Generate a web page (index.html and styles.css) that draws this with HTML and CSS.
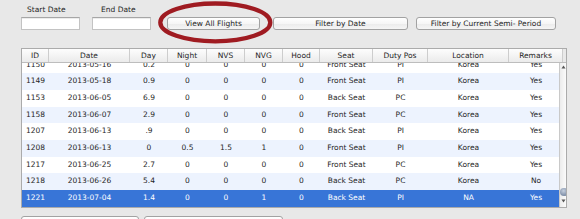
FILE: index.html
```html
<!DOCTYPE html>
<html>
<head>
<meta charset="utf-8">
<link rel="stylesheet" href="styles.css">
</head>
<body>
<div class="window">
  <div class="toolbar">
    <label class="field">
      <span class="field-label">Start Date</span>
      <input class="text-input" type="text">
    </label>
    <label class="field">
      <span class="field-label field-label--end">End Date</span>
      <input class="text-input" type="text">
    </label>
    <div class="actions">
      <button class="btn btn-all">View All Flights</button>
      <button class="btn btn-date">Filter by Date</button>
      <button class="btn btn-semi">Filter by Current Semi- Period</button>
    </div>
  </div>

  <div class="grid">
    <div class="thead">
      <div class="th">ID</div>
      <div class="th">Date</div>
      <div class="th">Day</div>
      <div class="th">Night</div>
      <div class="th">NVS</div>
      <div class="th">NVG</div>
      <div class="th">Hood</div>
      <div class="th">Seat</div>
      <div class="th">Duty Pos</div>
      <div class="th">Location</div>
      <div class="th">Remarks</div>
      <div class="th th-corner"></div>
    </div>
    <div class="tbody">
      <div class="rows">
        <div class="row"><span>1150</span><span>2013-05-16</span><span>0.2</span><span>0</span><span>0</span><span>0</span><span>0</span><span>Front Seat</span><span>PI</span><span>Korea</span><span>Yes</span></div>
        <div class="row"><span>1149</span><span>2013-05-18</span><span>0.9</span><span>0</span><span>0</span><span>0</span><span>0</span><span>Front Seat</span><span>PI</span><span>Korea</span><span>Yes</span></div>
        <div class="row"><span>1153</span><span>2013-06-05</span><span>6.9</span><span>0</span><span>0</span><span>0</span><span>0</span><span>Back Seat</span><span>PC</span><span>Korea</span><span>Yes</span></div>
        <div class="row"><span>1158</span><span>2013-06-07</span><span>2.9</span><span>0</span><span>0</span><span>0</span><span>0</span><span>Front Seat</span><span>PC</span><span>Korea</span><span>Yes</span></div>
        <div class="row"><span>1207</span><span>2013-06-13</span><span>.9</span><span>0</span><span>0</span><span>0</span><span>0</span><span>Back Seat</span><span>PI</span><span>Korea</span><span>Yes</span></div>
        <div class="row"><span>1208</span><span>2013-06-13</span><span>0</span><span>0.5</span><span>1.5</span><span>1</span><span>0</span><span>Front Seat</span><span>PI</span><span>Korea</span><span>Yes</span></div>
        <div class="row"><span>1217</span><span>2013-06-25</span><span>2.7</span><span>0</span><span>0</span><span>0</span><span>0</span><span>Front Seat</span><span>PC</span><span>Korea</span><span>Yes</span></div>
        <div class="row"><span>1218</span><span>2013-06-26</span><span>5.4</span><span>0</span><span>0</span><span>0</span><span>0</span><span>Back Seat</span><span>PC</span><span>Korea</span><span>No</span></div>
        <div class="row is-selected"><span>1221</span><span>2013-07-04</span><span>1.4</span><span>0</span><span>0</span><span>1</span><span>0</span><span>Back Seat</span><span>PI</span><span>NA</span><span>Yes</span></div>
      </div>
      <div class="scrollbar">
        <svg class="scroll-up" width="5" height="4" viewBox="0 0 5 4"><path d="M2.5 0.5 L4.5 3.5 L0.5 3.5 Z" fill="#555"/></svg>
        <div class="scroll-knob"></div>
        <svg class="scroll-down" width="5" height="4" viewBox="0 0 5 4"><path d="M0.5 0.5 L4.5 0.5 L2.5 3.5 Z" fill="#555"/></svg>
      </div>
    </div>
  </div>

  <div class="bottom-actions">
    <button class="btn btn-b1"></button>
    <button class="btn btn-b2"></button>
  </div>

  <svg class="annotation" width="130" height="48" viewBox="0 0 130 48">
    <ellipse cx="65.3" cy="22.4" rx="55" ry="18.9" fill="none" stroke="#9f1b21" stroke-width="4.3"/>
  </svg>
</div>
</body>
</html>
```

FILE: styles.css
```css
html, body {
  margin: 0;
  padding: 0;
}

body {
  width: 580px;
  height: 219px;
  overflow: hidden;
  background: #e8e8e8;
  font-family: "DejaVu Sans", "Lucida Grande", sans-serif;
  font-size: 7.5px;
  color: #1f1f1f;
}

.window {
  position: relative;
  height: 219px;
  overflow: hidden;
}

/* ---------- toolbar ---------- */
.toolbar {
  display: flex;
  align-items: flex-end;
  padding: 4px 0 0 21px;
}

.field {
  display: flex;
  flex-direction: column;
  width: 59px;
  margin-right: 12px;
}

.field-label {
  line-height: 12px;
  padding-left: 6px;
  margin-bottom: 1px;
  white-space: nowrap;
}

.field-label--end {
  padding-left: 9px;
}

.text-input {
  display: block;
  width: 59px;
  height: 13px;
  box-sizing: border-box;
  margin: 0;
  padding: 0;
  border: 1px solid #c3c3c3;
  border-top-color: #a6a6a6;
  background: #fff;
  box-shadow: inset 0 1px 0 #ececec;
  outline: none;
}

.actions {
  display: flex;
  gap: 8px;
  margin-left: 4px;
}

.btn {
  display: block;
  height: 13px;
  box-sizing: border-box;
  margin: 0;
  padding: 0;
  border: 1px solid #a2a2a2;
  border-radius: 3px;
  background: linear-gradient(#ffffff, #f6f6f6 50%, #ebebeb 52%, #f5f5f5);
  font: inherit;
  color: #1f1f1f;
  line-height: 11px;
  text-align: center;
  white-space: nowrap;
}

.btn-all { width: 93px; margin-right: 5px; }
.btn-date { width: 135px; }
.btn-semi { width: 140px; }

/* ---------- table ---------- */
.grid {
  margin: 18px 0 0 21px;
  width: 546px;
  box-sizing: border-box;
  border: 1px solid #ababab;
  background: #fff;
}

.thead,
.row {
  display: grid;
  grid-template-columns: 27px 81px 38px 39px 38px 38px 37px 53px 55px 81px 54px 1fr;
}

.thead {
  height: 13px;
  border-bottom: 1px solid #bdbdbd;
  background: linear-gradient(#fdfdfd, #f3f3f3 55%, #ebebeb);
}

.th {
  border-right: 1px solid #cdcdcd;
  text-align: center;
  line-height: 13px;
  white-space: nowrap;
}

.th-corner {
  border-right: 0;
  background: #e9e9e9;
}

.tbody {
  position: relative;
  overflow: hidden;
}

.rows {
  margin-top: -6.3px;
}

.row {
  height: 16.66px;
  line-height: 16.66px;
  text-align: center;
  white-space: nowrap;
}

.row:nth-child(even) {
  background: #edf3fe;
}

.row.is-selected {
  background: #3875d7;
  color: #fff;
}

.scrollbar {
  position: absolute;
  top: 0;
  right: 0;
  bottom: 0;
  width: 6px;
  border-left: 1px solid #c9c9c9;
  background: linear-gradient(to right, #ececec, #fbfbfb);
}

.scroll-up {
  position: absolute;
  top: 2px;
  left: 0.5px;
}

.scroll-down {
  position: absolute;
  top: 136px;
  left: 0.5px;
}

.scroll-knob {
  position: absolute;
  top: 125px;
  left: 0;
  width: 7.5px;
  height: 8px;
  border-radius: 50%;
  background: radial-gradient(circle at 45% 35%, #c6d0de, #8e9db4 55%, #6e7f98);
}

/* ---------- bottom buttons ---------- */
.bottom-actions {
  display: flex;
  gap: 5px;
  margin: 8.4px 0 0 21px;
}

.btn-b1 { width: 118px; height: 20px; }
.btn-b2 { width: 139px; height: 20px; }

/* ---------- annotation ---------- */
.annotation {
  position: absolute;
  left: 150px;
  top: 0;
}
```
